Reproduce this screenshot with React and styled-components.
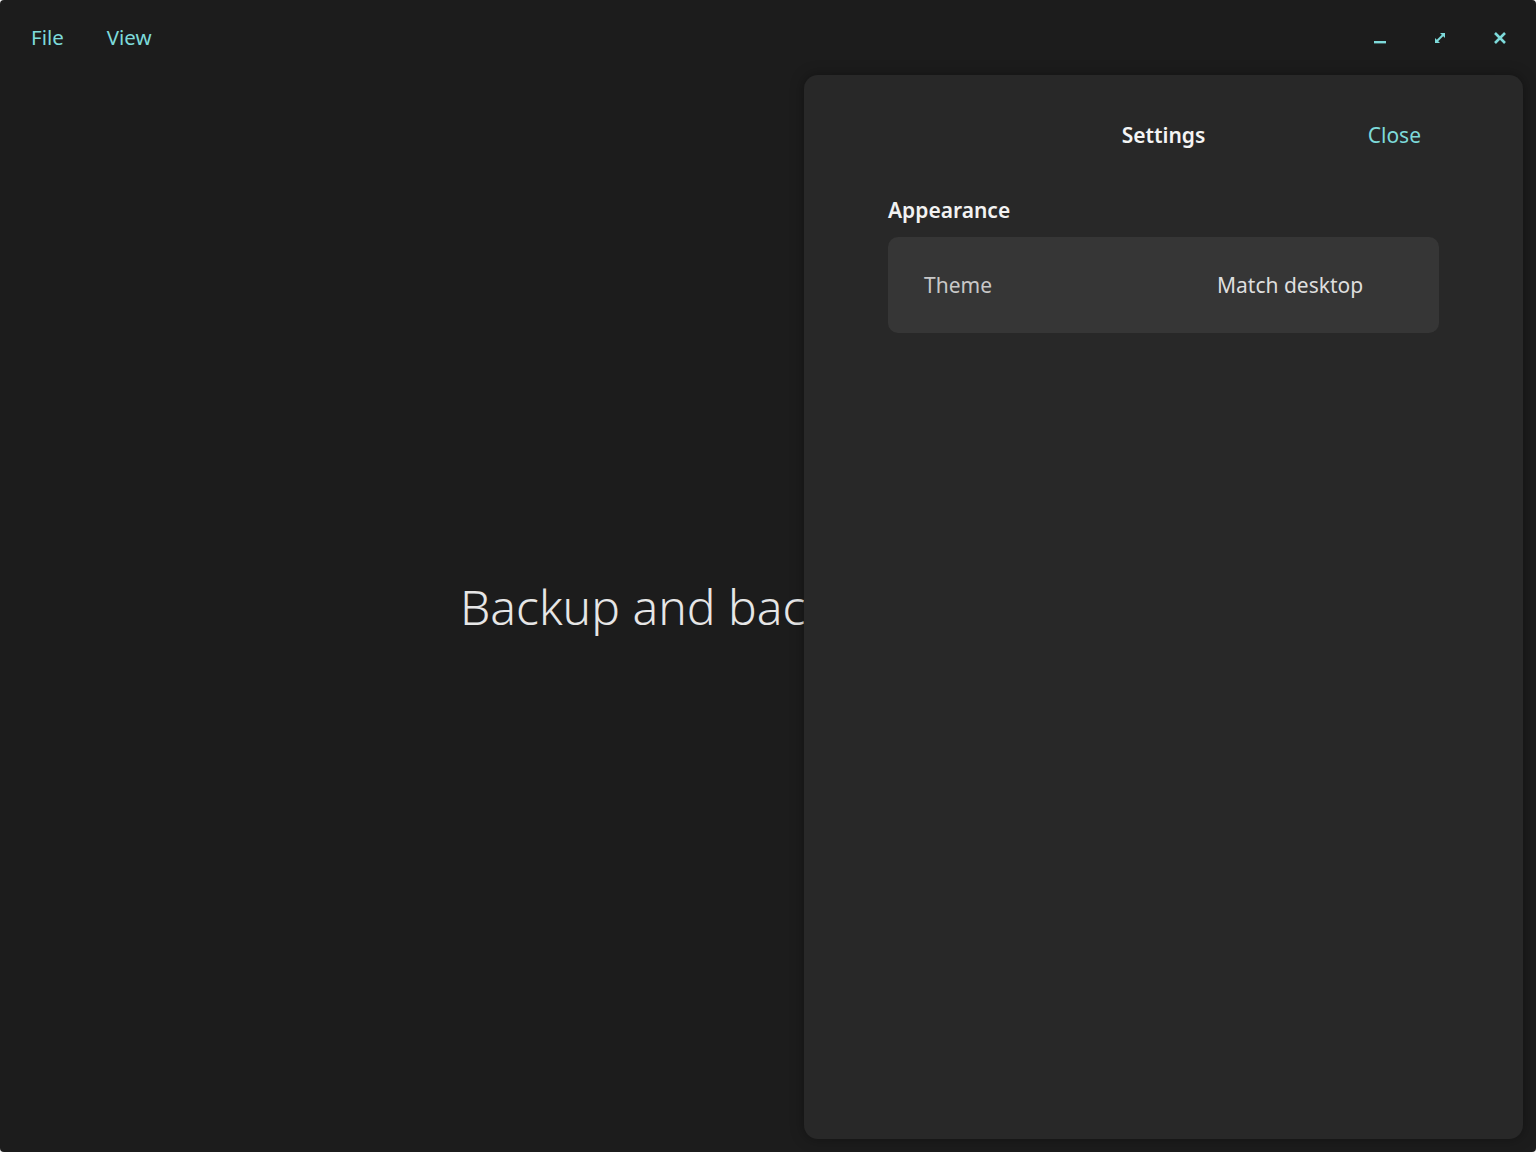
import React from "react";
import styled, { createGlobalStyle } from "styled-components";

const GlobalStyle = createGlobalStyle`
  html, body {
    margin: 0;
    padding: 0;
    background: #f4f4f4;
  }
  * {
    box-sizing: border-box;
  }
`;

const Window = styled.div`
  position: relative;
  width: 1536px;
  height: 1152px;
  background: #1c1c1c;
  border-radius: 4px;
  overflow: hidden;
  font-family: "Noto Sans", "Open Sans", sans-serif;
  display: flex;
  flex-direction: column;
`;

const TitleBar = styled.header`
  height: 75px;
  display: flex;
  align-items: center;
  justify-content: space-between;
  padding: 0 18px 0 31px;
  flex-shrink: 0;
`;

const Menu = styled.nav`
  display: flex;
  gap: 43px;
  margin-top: -2px;
`;

const MenuItem = styled.span`
  color: #7ddada;
  font-size: 20.5px;
  line-height: 26px;
  cursor: default;
`;

const Controls = styled.div`
  display: flex;
  gap: 24px;
`;

const ControlButton = styled.button`
  width: 36px;
  height: 36px;
  display: flex;
  align-items: center;
  justify-content: center;
  background: none;
  border: none;
  padding: 0;
  color: #7ddada;
`;

const Main = styled.main`
  flex: 1;
  display: flex;
  align-items: center;
  padding: 0 0 14px 460px;
`;

const Hero = styled.h1`
  margin: 0;
  color: #e6e6e6;
  font-size: 48px;
  font-weight: 300;
  white-space: nowrap;
`;

const Drawer = styled.aside`
  position: absolute;
  top: 75px;
  left: 804px;
  width: 719px;
  height: 1064px;
  background: #282828;
  border-radius: 14px;
  box-shadow: 0 0 14px rgba(0, 0, 0, 0.35);
  padding: 0 84px;
`;

const DrawerHeader = styled.div`
  height: 122px;
  display: grid;
  grid-template-columns: 1fr auto 1fr;
  align-items: center;
  padding-bottom: 2px;
`;

const DrawerTitle = styled.h2`
  grid-column: 2;
  margin: 0;
  color: #f4f4f4;
  font-size: 21px;
  font-weight: 600;
`;

const CloseLink = styled.span`
  justify-self: end;
  margin-right: 18px;
  color: #7ddada;
  font-size: 21px;
`;

const SectionTitle = styled.h3`
  margin: 0 0 14px;
  color: #f2f2f2;
  font-size: 21px;
  font-weight: 600;
  line-height: 26px;
`;

const Card = styled.div`
  height: 96px;
  background: #363636;
  border-radius: 10px;
  display: flex;
  align-items: center;
  padding: 0 36px;
`;

const RowLabel = styled.span`
  width: 293px;
  color: #c8c8c8;
  font-size: 21px;
`;

const RowValue = styled.span`
  color: #dedede;
  font-size: 21px;
`;

const Minimize = () => (
  <svg width="14" height="14" viewBox="0 0 14 14">
    <rect x="1" y="10" width="12" height="2.4" fill="currentColor" />
  </svg>
);

const Maximize = () => (
  <svg width="14" height="14" viewBox="0 0 14 14" fill="none">
    <path d="M3 11 L11 3" stroke="currentColor" strokeWidth="2" />
    <path d="M7 2 H12 V7 Z" fill="currentColor" />
    <path d="M2 7 V12 H7 Z" fill="currentColor" />
  </svg>
);

const CloseIcon = () => (
  <svg width="14" height="14" viewBox="0 0 14 14" fill="none">
    <path d="M2 2 L12 12 M12 2 L2 12" stroke="currentColor" strokeWidth="2.6" />
  </svg>
);

const App = () => (
  <>
    <GlobalStyle />
    <Window>
      <TitleBar>
        <Menu>
          <MenuItem>File</MenuItem>
          <MenuItem>View</MenuItem>
        </Menu>
        <Controls>
          <ControlButton><Minimize /></ControlButton>
          <ControlButton><Maximize /></ControlButton>
          <ControlButton><CloseIcon /></ControlButton>
        </Controls>
      </TitleBar>
      <Main>
        <Hero>Backup and backup history</Hero>
      </Main>
      <Drawer>
        <DrawerHeader>
          <DrawerTitle>Settings</DrawerTitle>
          <CloseLink>Close</CloseLink>
        </DrawerHeader>
        <SectionTitle>Appearance</SectionTitle>
        <Card>
          <RowLabel>Theme</RowLabel>
          <RowValue>Match desktop</RowValue>
        </Card>
      </Drawer>
    </Window>
  </>
);

export default App;
